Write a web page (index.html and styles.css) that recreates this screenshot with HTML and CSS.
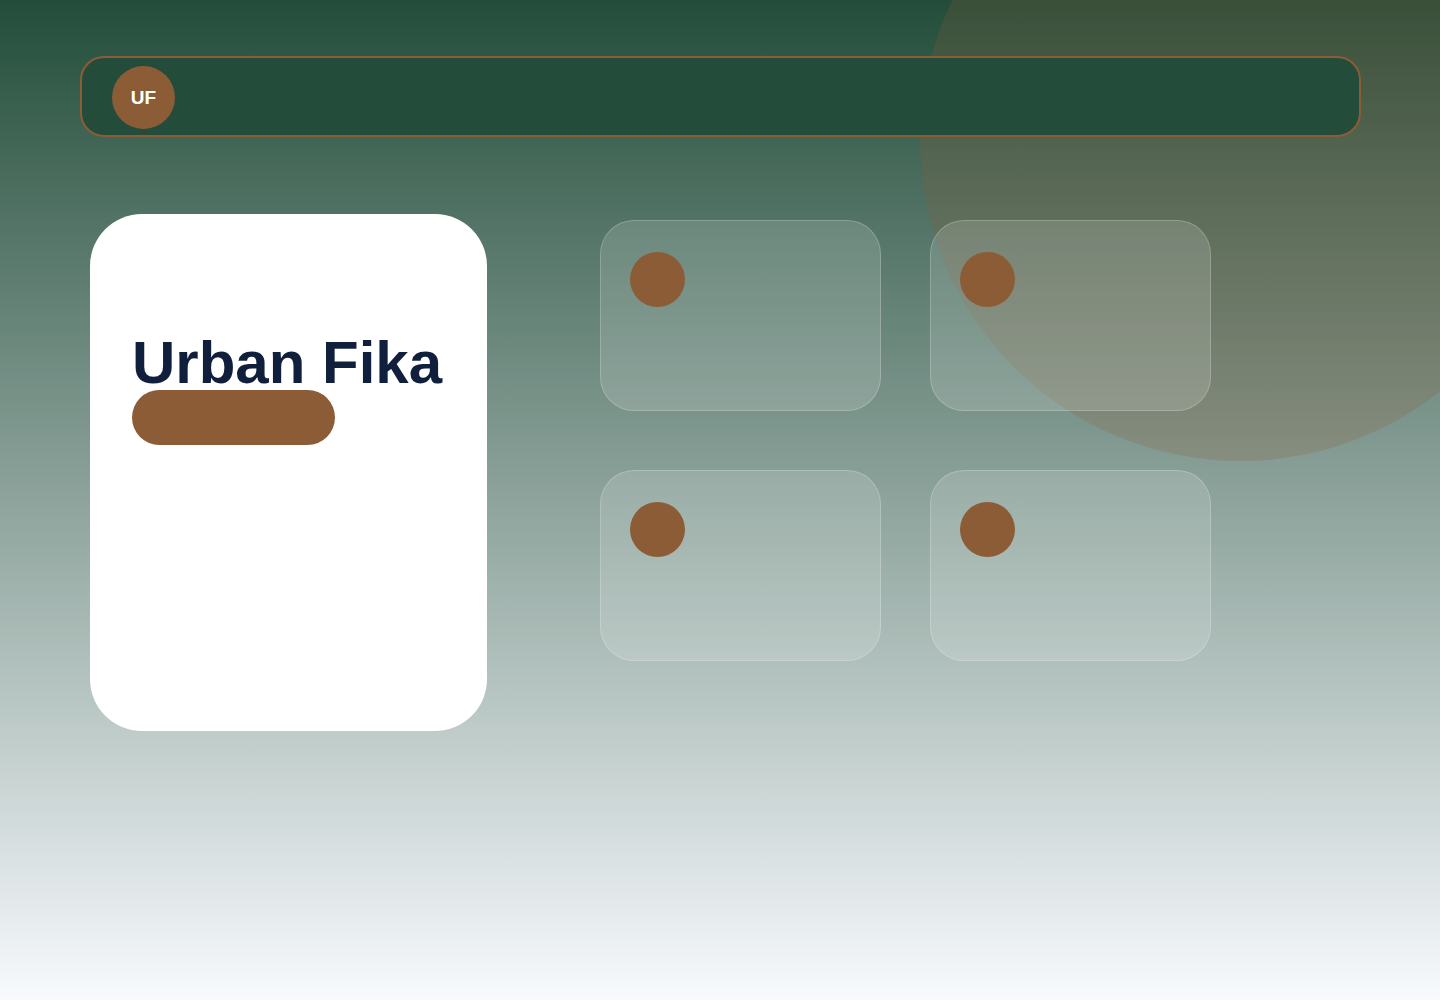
FILE: index.html
```html
<!DOCTYPE html>
<html lang="en">
    <head>
        <meta charset="utf-8">
        <meta name="viewport" content="width=device-width, initial-scale=1.0">
        <title>Urban Fika</title>
        <link rel="stylesheet" href="styles.css">
    </head>
    <body>
        <div class="page">
            <div class="glow"></div>
            <header class="topbar">
                <a class="logo" href="#">UF</a>
            </header>
            <main class="content">
                <section class="hero">
                    <h1>Urban Fika</h1>
                    <button class="cta" type="button" aria-label="Menu"></button>
                </section>
                <section class="tiles">
                    <div class="tile"><span class="dot"></span></div>
                    <div class="tile"><span class="dot"></span></div>
                    <div class="tile"><span class="dot"></span></div>
                    <div class="tile"><span class="dot"></span></div>
                </section>
            </main>
        </div>
    </body>
</html>
```

FILE: styles.css
```css
*{
    box-sizing: border-box;
}
body{
    margin: 0px;
    font-family: "Liberation Sans", Arial, sans-serif;
}
.page{
    position: relative;
    overflow: hidden;
    min-height: 100vh;
    padding: 56px 79px 56px 80px;
    background: linear-gradient(#234d3a, #f8fafe);
}
/* big circle behind the top right corner */
.glow{
    position: absolute;
    top: -180px;
    right: -121px;
    width: 641px;
    height: 641px;
    border-radius: 50%;
    background-color: rgba(139, 92, 54, .22);
}
.topbar{
    position: relative;
    display: flex;
    padding: 8px 30px 6px;
    border: 2px solid #8b5c36;
    border-radius: 24px;
    background-color: #234d3a;
}
.logo{
    display: flex;
    align-items: center;
    justify-content: center;
    width: 63px;
    height: 63px;
    border-radius: 50%;
    background-color: #8b5c36;
    color: white;
    font-size: 19px;
    font-weight: bold;
    text-decoration: none;
}
.content{
    position: relative;
    display: grid;
    grid-template-columns: 397px minmax(0, 611px);
    align-items: start;
    gap: 113px;
    margin-top: 77px;
    padding-left: 10px;
}
.hero{
    min-height: 517px;
    padding: 122px 42px 42px;
    border-radius: 52px;
    background-color: white;
}
.hero h1{
    margin: 0px;
    color: #10203c;
    font-size: 60px;
    line-height: 54px;
    white-space: nowrap;
}
.cta{
    display: block;
    width: 203px;
    height: 55px;
    border: none;
    border-radius: 28px;
    background-color: #8b5c36;
    cursor: pointer;
}
.tiles{
    display: grid;
    grid-template-columns: 1fr 1fr;
    gap: 59px 49px;
    margin-top: 6px;
}
.tile{
    min-height: 191px;
    padding: 31px 29px;
    border: 1px solid rgba(255, 255, 255, .2);
    border-radius: 34px;
    background-color: rgba(255, 255, 255, .15);
}
.dot{
    display: block;
    width: 55px;
    height: 55px;
    border-radius: 50%;
    background-color: #8b5c36;
}
```
